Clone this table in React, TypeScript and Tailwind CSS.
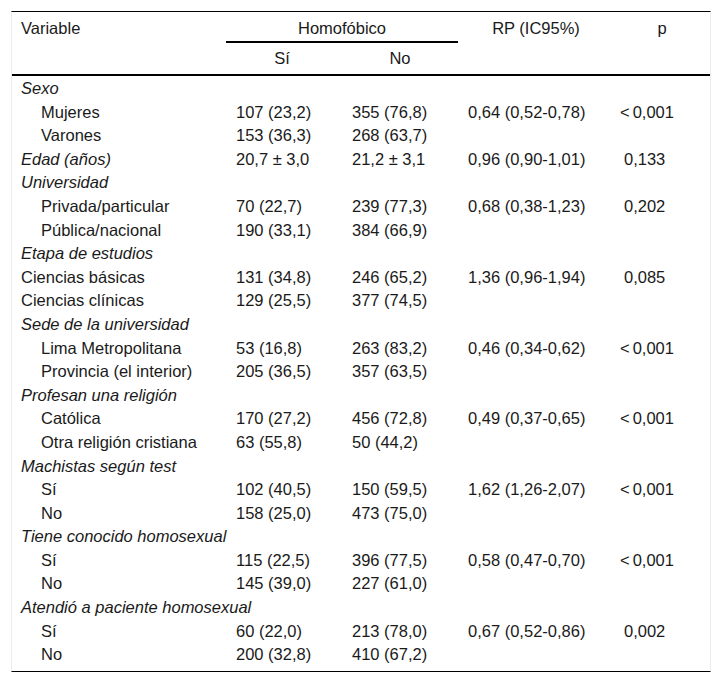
import React from "react";

type Row = {
  label: string;
  kind: "group" | "sub" | "plain" | "groupData";
  si?: string;
  no?: string;
  rp?: string;
  p?: string;
};

const rows: Row[] = [
  { label: "Sexo", kind: "group" },
  { label: "Mujeres", kind: "sub", si: "107 (23,2)", no: "355 (76,8)", rp: "0,64 (0,52-0,78)", p: "< 0,001" },
  { label: "Varones", kind: "sub", si: "153 (36,3)", no: "268 (63,7)" },
  { label: "Edad (años)", kind: "groupData", si: "20,7 ± 3,0", no: "21,2 ± 3,1", rp: "0,96 (0,90-1,01)", p: "0,133" },
  { label: "Universidad", kind: "group" },
  { label: "Privada/particular", kind: "sub", si: "70 (22,7)", no: "239 (77,3)", rp: "0,68 (0,38-1,23)", p: "0,202" },
  { label: "Pública/nacional", kind: "sub", si: "190 (33,1)", no: "384 (66,9)" },
  { label: "Etapa de estudios", kind: "group" },
  { label: "Ciencias básicas", kind: "plain", si: "131 (34,8)", no: "246 (65,2)", rp: "1,36 (0,96-1,94)", p: "0,085" },
  { label: "Ciencias clínicas", kind: "plain", si: "129 (25,5)", no: "377 (74,5)" },
  { label: "Sede de la universidad", kind: "group" },
  { label: "Lima Metropolitana", kind: "sub", si: "53 (16,8)", no: "263 (83,2)", rp: "0,46 (0,34-0,62)", p: "< 0,001" },
  { label: "Provincia (el interior)", kind: "sub", si: "205 (36,5)", no: "357 (63,5)" },
  { label: "Profesan una religión", kind: "group" },
  { label: "Católica", kind: "sub", si: "170 (27,2)", no: "456 (72,8)", rp: "0,49 (0,37-0,65)", p: "< 0,001" },
  { label: "Otra religión cristiana", kind: "sub", si: "63 (55,8)", no: "50 (44,2)" },
  { label: "Machistas según test", kind: "group" },
  { label: "Sí", kind: "sub", si: "102 (40,5)", no: "150 (59,5)", rp: "1,62 (1,26-2,07)", p: "< 0,001" },
  { label: "No", kind: "sub", si: "158 (25,0)", no: "473 (75,0)" },
  { label: "Tiene conocido homosexual", kind: "group" },
  { label: "Sí", kind: "sub", si: "115 (22,5)", no: "396 (77,5)", rp: "0,58 (0,47-0,70)", p: "< 0,001" },
  { label: "No", kind: "sub", si: "145 (39,0)", no: "227 (61,0)" },
  { label: "Atendió a paciente homosexual", kind: "group" },
  { label: "Sí", kind: "sub", si: "60 (22,0)", no: "213 (78,0)", rp: "0,67 (0,52-0,86)", p: "0,002" },
  { label: "No", kind: "sub", si: "200 (32,8)", no: "410 (67,2)" },
];

function PVal({ v }: { v?: string }) {
  if (!v) return null;
  if (v.startsWith("<")) {
    return (
      <span className="ml-[-4px]">
        <span className="mr-[3px]">&lt;</span>
        {v.slice(2)}
      </span>
    );
  }
  return <span>{v}</span>;
}

export default function App() {
  return (
    <div className="bg-white p-[11px] font-['Liberation_Sans',Arial,sans-serif] text-[16.5px] leading-[19.6px] text-[#1a1a1a]">
      <div className="w-[700px] border-t border-b border-t-black border-b-black border-x border-x-[#ececec]">
        {/* header */}
        <div className="flex border-b-2 border-black">
          <div className="w-[214px] pl-[9px] pt-[7px]">Variable</div>
          <div className="w-[232px] flex flex-col">
            <div className="h-[31px] pt-[7px] border-b-2 border-black text-center">
              Homofóbico
            </div>
            <div className="h-[31px] pt-[6px] flex">
              <div className="w-[116px] pr-[4px] text-center">Sí</div>
              <div className="w-[116px] text-center">No</div>
            </div>
          </div>
          <div className="w-[156px] pt-[7px] text-center">RP (IC95%)</div>
          <div className="w-[96px] pt-[7px] text-center">p</div>
        </div>
        {/* body */}
        <div className="pt-[1px] pb-[4px]">
          {rows.map((r, i) => (
            <div key={i} className="flex py-[2px]">
              <div
                className={
                  "w-[214px] shrink-0 whitespace-nowrap " +
                  (r.kind === "sub" ? "pl-[29px]" : "pl-[9px]") +
                  (r.kind === "group" || r.kind === "groupData" ? " italic" : "")
                }
              >
                {r.label}
              </div>
              <div className="w-[116px] shrink-0 whitespace-nowrap pl-[10px]">{r.si}</div>
              <div className="w-[116px] shrink-0 whitespace-nowrap pl-[10px]">{r.no}</div>
              <div className="w-[156px] shrink-0 whitespace-nowrap pl-[10px]">{r.rp}</div>
              <div className="w-[96px] shrink-0 whitespace-nowrap pl-[10px]">
                <PVal v={r.p} />
              </div>
            </div>
          ))}
        </div>
      </div>
    </div>
  );
}
